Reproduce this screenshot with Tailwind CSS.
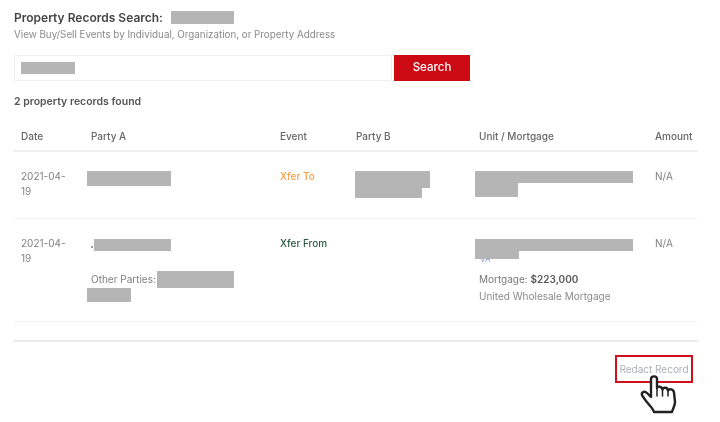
<!doctype html>
<html lang="en">
<head>
  <meta charset="utf-8" />
  <title>Property Records Search</title>
  <script src="https://cdn.jsdelivr.net/npm/@tailwindcss/browser@4"></script>
</head>
<body class="bg-white text-[#4a4a4a] font-['Inter',sans-serif]">
  <main class="relative w-[720px] h-[422px] overflow-hidden pl-[14px] pt-[10px] blur-[0.5px]">
    <!-- heading -->
    <div class="flex items-center h-[15px] text-[12px] font-semibold text-[#444]">
      <span>Property Records Search:</span>
      <span class="ml-[8px] w-[63px] h-[13px] bg-[#b5b5b5]"></span>
    </div>
    <p class="mt-[2px] text-[9.8px] leading-[15px] text-[#8a8a8a]">View Buy/Sell Events by Individual, Organization, or Property Address</p>

    <!-- search -->
    <div class="flex mt-[13px] h-[26px]">
      <div class="flex items-center w-[378px] border border-[#eeeeee] rounded-[2px] pl-[6px]">
        <span class="w-[54px] h-[12px] bg-[#b5b5b5]"></span>
      </div>
      <button class="ml-[2px] w-[76px] bg-[#cc0a14] text-white text-[11.5px] font-medium" type="button">Search</button>
    </div>
    <p class="mt-[13px] text-[10.5px] leading-[15px] font-semibold text-[#555]">2 property records found</p>

    <!-- table -->
    <div class="-ml-[1px] mt-[14px] w-[685px] text-[10px] leading-[15px]">
      <div class="grid grid-cols-[70px_189px_76px_123px_176px_51px] h-[29px] items-center border-b-2 border-[#f0f0f0] font-medium text-[#666] *:pl-[8px]">
        <div>Date</div>
        <div>Party A</div>
        <div>Event</div>
        <div>Party B</div>
        <div>Unit / Mortgage</div>
        <div class="whitespace-nowrap">Amount</div>
      </div>

      <div class="grid grid-cols-[70px_189px_76px_123px_176px_51px] h-[67px] border-b border-[#f3f3f3] pt-[17px] *:pl-[8px] text-[#808080]">
        <div>2021-04-<br>19</div>
        <div><div class="-ml-[4px] mt-[2px] w-[84px] h-[15px] bg-[#b5b5b5]"></div></div>
        <div class="font-medium text-[#f5a04a]">Xfer To</div>
        <div>
          <div class="-ml-[1px] mt-[2px] w-[75px] h-[17px] bg-[#b5b5b5]"></div>
          <div class="-ml-[1px] w-[67px] h-[10px] bg-[#b5b5b5]"></div>
        </div>
        <div>
          <div class="-ml-[4px] mt-[2px] w-[158px] h-[12px] bg-[#b5b5b5]"></div>
          <div class="-ml-[4px] w-[43px] h-[14px] bg-[#b5b5b5]"></div>
        </div>
        <div>N/A</div>
      </div>

      <div class="grid grid-cols-[70px_189px_76px_123px_176px_51px] h-[103px] border-b border-[#f3f3f3] pt-[17px] *:pl-[8px] text-[#808080]">
        <div>2021-04-<br>19</div>
        <div>
          <div class="flex items-center mt-[3px] h-[12px]">
            <span class="w-[2px] h-[2px] mt-[3px] bg-[#999]"></span>
            <span class="ml-[1px] w-[77px] h-[12px] bg-[#b5b5b5]"></span>
          </div>
          <div class="flex items-center mt-[20px] h-[17px]">
            <span>Other Parties:</span>
            <span class="ml-[1px] w-[77px] h-[17px] bg-[#b5b5b5]"></span>
          </div>
          <div class="-ml-[4px] w-[44px] h-[14px] bg-[#b5b5b5]"></div>
        </div>
        <div class="font-medium text-[#2f5d46]">Xfer From</div>
        <div></div>
        <div>
          <div class="relative z-10 -ml-[4px] mt-[3px] w-[158px] h-[12px] bg-[#b5b5b5]"></div>
          <div class="relative z-10 -ml-[4px] w-[44px] h-[8px] bg-[#b5b5b5]"></div>
          <div class="-mt-[5px] ml-[1px] text-[8px] leading-[10px] text-[#7f9ad6]">VA</div>
          <div class="mt-[8px] text-[#777]">Mortgage: <span class="font-semibold text-[#555]">$223,000</span></div>
          <div class="mt-[2px] text-[#8a8a8a]">United Wholesale Mortgage</div>
        </div>
        <div>N/A</div>
      </div>

      <div class="mt-[18px] h-[2px] bg-[#ececec]"></div>
    </div>

    <!-- redact -->
    <div class="flex justify-end w-[679px] mt-[13px]">
      <button class="w-[78px] h-[28px] border-2 border-[#d0101c] text-[10px] text-[#a9b0b5] whitespace-nowrap" type="button">Redact Record</button>
    </div>

    <!-- cursor -->
    <svg class="absolute left-[640px] top-[375px]" width="37" height="39" viewBox="0 0 37 39" fill="#fff" stroke="#222" stroke-width="2.4" stroke-linejoin="round" stroke-linecap="round">
      <path d="M11 22 L11 4 C11 0.5 17 0.5 17 4 L17 13 C17 11 22 11 22.5 14.5 C23 12 27.5 12 28 15.5 C29 13.5 33.5 14 34 17.5 L35 27 C35 31 33 33 32 37 L14 37 C13 33 9 30 6 26 L2.5 21 C0.5 18 4 15 7 18 Z" />
      <path d="M17 13 L17 21 M22.5 14.5 L22.5 21 M28 15.5 L28 21" fill="none" stroke-width="1.5" />
    </svg>
  </main>
</body>
</html>
